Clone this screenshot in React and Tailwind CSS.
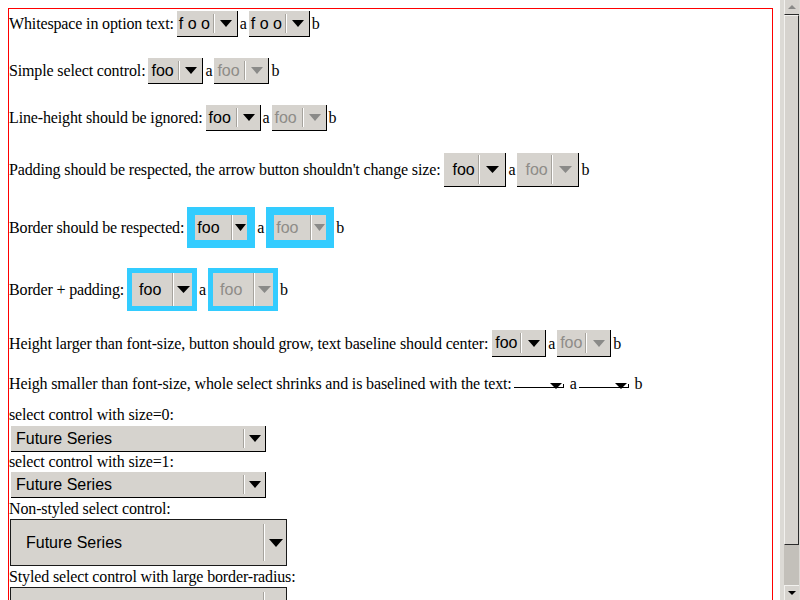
import clsx from 'clsx';

const serif = "font-['Liberation_Serif',serif]";
const sans = "font-['Liberation_Sans',sans-serif]";

function Tri({ w = 12, h = 7, color = '#000', up = false }) {
  return (
    <svg width={w} height={h} viewBox={`0 0 ${w} ${h}`} className="block">
      <path d={up ? `M0 ${h}H${w}L${w / 2} 0Z` : `M0 0H${w}L${w / 2} ${h}Z`} fill={color} />
    </svg>
  );
}

// a native-looking dropdown, sizes handed in as full class strings
function Select({ text = 'foo', disabled, box, textArea, arrowArea, sep = 'my-[3px]', tri = [12, 7] }) {
  return (
    <span
      className={clsx(
        'flex shrink-0 bg-[#d6d3ce] text-[16px] leading-none tracking-normal',
        sans,
        box,
        disabled ? 'text-[#8e8c88]' : 'text-black'
      )}
    >
      <span className={clsx('flex items-center whitespace-pre', textArea)}>{text}</span>
      <span className={clsx('w-[2px] border-l border-l-[#a6a39d] border-r border-r-white', sep)} />
      <span className={clsx('flex items-center justify-center', arrowArea)}>
        <Tri w={tri[0]} h={tri[1]} color={disabled ? '#8a8a88' : '#000'} />
      </span>
    </span>
  );
}

const plain = 'border-r border-b border-r-black border-b-black';
const cyan8 = 'border-[8px] border-[#33ccff]';
const cyan5 = 'border-[5px] border-[#33ccff]';

function Tiny() {
  return (
    <span className="relative mr-[4px] block h-[7px] w-[50px] shrink-0 border-b border-black">
      <span className="absolute bottom-0 right-0 h-[3px] w-px bg-black" />
      <span className="absolute left-[36px] top-[2px]">
        <Tri w={12} h={6} />
      </span>
    </span>
  );
}

function Row({ className, children }) {
  return <div className={clsx('flex items-center gap-[2px] whitespace-nowrap', className)}>{children}</div>;
}

function Scrollbar() {
  return (
    <div className="flex h-[600px] w-[20px] shrink-0 flex-col bg-[#dcdad5] pl-[4px] pr-[1px]">
      <div className="flex h-[15px] shrink-0 items-center justify-center border-b border-[#2a2a2a] border-l border-l-[#f2f1ee] bg-[#d6d3ce]">
        <Tri w={8} h={4} up color="#8a8a88" />
      </div>
      <div className="h-[530px] shrink-0 border-l border-l-[#f2f1ee] border-t border-t-[#f2f1ee] border-r border-r-[#2a2a2a] border-b border-b-[#2a2a2a] bg-[#d6d3ce]" />
      <div className="flex-1 bg-[#c3c0ba]" />
      <div className="flex h-[15px] shrink-0 items-center justify-center border-l border-l-[#f2f1ee] border-t border-t-[#f2f1ee] bg-[#d6d3ce]">
        <Tri w={8} h={4} />
      </div>
    </div>
  );
}

export default function App() {
  return (
    <div className={clsx('flex h-[600px] w-[800px] overflow-hidden bg-white text-[16px] tracking-[-0.14px] text-black', serif)}>
      <div className="w-[780px] shrink-0 p-[8px]">
        <div className="flex h-[700px] w-[765px] flex-col border border-[#ff0000] border-b-0">
          <Row className="h-[30px]">
            <span className="mr-px">Whitespace in option text:</span>
            <Select text="f o o" box={clsx(plain, 'h-[26px] w-[61px]')} textArea="w-[36px] pl-[2px]" arrowArea="w-[22px]" />
            <span>a</span>
            <Select text="f o o" box={clsx(plain, 'h-[26px] w-[61px]')} textArea="w-[36px] pl-[2px]" arrowArea="w-[22px]" />
            <span>b</span>
          </Row>

          <Row className="mt-[17px] h-[30px]">
            <span className="mr-px">Simple select control:</span>
            <Select box={clsx(plain, 'h-[26px] w-[55px]')} textArea="w-[30px] pl-[3px]" arrowArea="w-[22px]" />
            <span>a</span>
            <Select disabled box={clsx(plain, 'h-[26px] w-[55px]')} textArea="w-[30px] pl-[3px]" arrowArea="w-[22px]" />
            <span>b</span>
          </Row>

          <Row className="mt-[17px] h-[30px]">
            <span className="mr-px">Line-height should be ignored:</span>
            <Select box={clsx(plain, 'h-[26px] w-[55px]')} textArea="w-[30px] pl-[3px]" arrowArea="w-[22px]" />
            <span>a</span>
            <Select disabled box={clsx(plain, 'h-[26px] w-[55px]')} textArea="w-[30px] pl-[3px]" arrowArea="w-[22px]" />
            <span>b</span>
          </Row>

          <Row className="mt-[17px] h-[40px]">
            <span className="mr-[2px]">Padding should be respected, the arrow button shouldn't change size:</span>
            <Select box={clsx(plain, 'h-[34px] w-[62px]')} textArea="w-[34px] pl-[8px]" arrowArea="w-[25px]" sep="my-[2px]" tri={[13, 7]} />
            <span>a</span>
            <Select disabled box={clsx(plain, 'h-[34px] w-[62px]')} textArea="w-[34px] pl-[8px]" arrowArea="w-[25px]" sep="my-[2px]" tri={[13, 7]} />
            <span>b</span>
          </Row>

          <Row className="mt-[14px] h-[47px]">
            <span className="mr-px">Border should be respected:</span>
            <Select box={clsx(cyan8, 'h-[41px] w-[68px]')} textArea="w-[36px] pl-[2px]" arrowArea="w-[14px]" sep="my-0" tri={[11, 7]} />
            <span>a</span>
            <Select disabled box={clsx(cyan8, 'h-[41px] w-[68px]')} textArea="w-[36px] pl-[2px]" arrowArea="w-[14px]" sep="my-0" tri={[11, 7]} />
            <span>b</span>
          </Row>

          <Row className="mt-[14px] h-[49px]">
            <span className="mr-px">Border + padding:</span>
            <Select box={clsx(cyan5, 'h-[43px] w-[70px]')} textArea="w-[40px] pl-[7px]" arrowArea="w-[18px]" sep="my-0" tri={[13, 7]} />
            <span>a</span>
            <Select disabled box={clsx(cyan5, 'h-[43px] w-[70px]')} textArea="w-[40px] pl-[7px]" arrowArea="w-[18px]" sep="my-0" tri={[13, 7]} />
            <span>b</span>
          </Row>

          <Row className="mt-[14px] h-[31px]">
            <span className="mr-[2px]">Height larger than font-size, button should grow, text baseline should center:</span>
            <Select box={clsx(plain, 'h-[27px] w-[54px]')} textArea="w-[28px] pl-[3px]" arrowArea="w-[23px]" />
            <span>a</span>
            <Select disabled box={clsx(plain, 'h-[27px] w-[54px]')} textArea="w-[28px] pl-[3px]" arrowArea="w-[23px]" />
            <span>b</span>
          </Row>

          <Row className="mt-[12px] h-[26px]">
            <span>Heigh smaller than font-size, whole select shrinks and is baselined with the text:</span>
            <Tiny />
            <span>a</span>
            <Tiny />
            <span>b</span>
          </Row>

          <div className="mt-[9px] h-[18px] leading-[18px]">select control with size=0:</div>
          <div className="mt-[2px] pl-[2px]">
            <Select
              text="Future Series"
              box={clsx(plain, 'h-[26px] w-[255px]')}
              textArea="w-[232px] pl-[5px]"
              arrowArea="w-[19px]"
            />
          </div>

          <div className="mt-px h-[18px] leading-[18px]">select control with size=1:</div>
          <div className="mt-px pl-[2px]">
            <Select
              text="Future Series"
              box={clsx(plain, 'h-[26px] w-[255px]')}
              textArea="w-[232px] pl-[5px]"
              arrowArea="w-[19px]"
            />
          </div>

          <div className="mt-[2px] h-[18px] leading-[18px]">Non-styled select control:</div>
          <div className="mt-px pl-px">
            <Select
              text="Future Series"
              box="h-[47px] w-[277px] border border-[#1a1a1a]"
              textArea="w-[252px] pl-[15px]"
              arrowArea="w-[21px]"
              sep="my-[4px]"
              tri={[14, 8]}
            />
          </div>

          <div className="mt-[2px] h-[18px] leading-[18px]">Styled select control with large border-radius:</div>
          <div className="mt-px pl-px">
            <Select
              text="Future Series"
              box="h-[47px] w-[277px] border border-[#1a1a1a]"
              textArea="w-[252px] pl-[15px]"
              arrowArea="w-[21px]"
              sep="my-[4px]"
              tri={[14, 8]}
            />
          </div>
        </div>
      </div>
      <Scrollbar />
    </div>
  );
}
